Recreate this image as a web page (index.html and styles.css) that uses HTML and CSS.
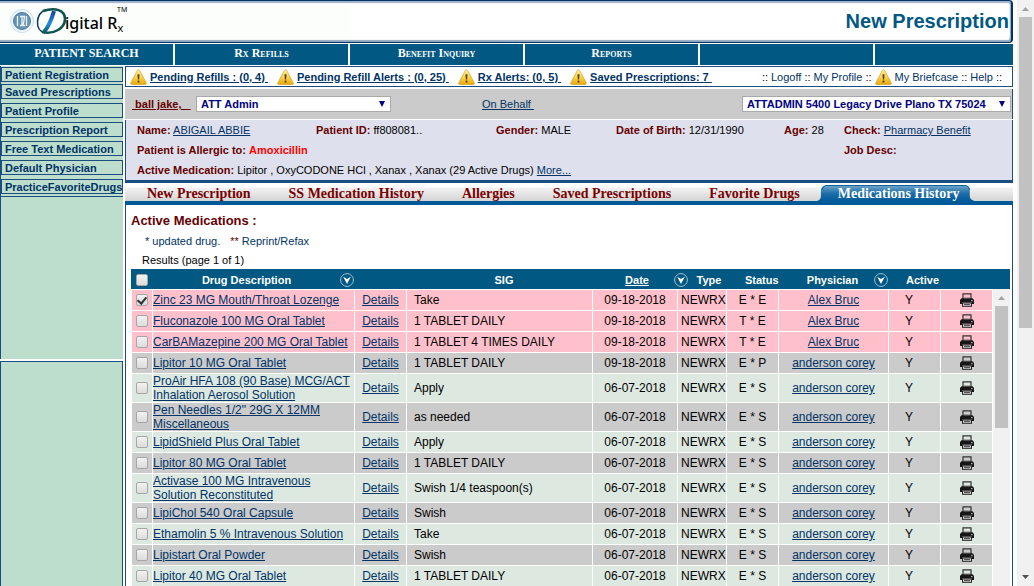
FILE: index.html
```
<!DOCTYPE html>
<html lang="en">
<head>
<meta charset="utf-8">
<title>Digital Rx - New Prescription</title>
<link rel="stylesheet" href="styles.css">
</head>
<body>
<svg class="defs" aria-hidden="true">
  <defs>
    <linearGradient id="gold" x1="0" y1="0" x2="0" y2="1"><stop offset="0" stop-color="#fff0a0"/><stop offset=".5" stop-color="#fbd34a"/><stop offset="1" stop-color="#e8a80c"/></linearGradient>
    <linearGradient id="tabfill" x1="0" y1="0" x2="0" y2="1"><stop offset="0" stop-color="#6fa6cc"/><stop offset=".5" stop-color="#1f6fa8"/><stop offset="1" stop-color="#005a99"/></linearGradient>
    <linearGradient id="dfill" x1="0" y1="0" x2="0" y2="1"><stop offset="0" stop-color="#1a3f9a"/><stop offset=".6" stop-color="#1f8fe0"/><stop offset="1" stop-color="#0b5a6c"/></linearGradient>
  </defs>
  <symbol id="warn" viewBox="0 0 17 16"><path d="M8.5.8 Q9.3.8 9.8 1.8 L16.3 14 Q16.6 15.4 15.3 15.5 H1.7 Q.4 15.4.7 14 L7.2 1.8 Q7.7.8 8.5.8Z" fill="url(#gold)" stroke="#d9a21b" stroke-width=".7"/><path d="M7.5 5.2h2l-.4 5.2H7.9z" fill="#4a3a2a"/><rect x="7.6" y="11.6" width="1.8" height="1.9" fill="#4a3a2a"/></symbol>
  <symbol id="print" viewBox="0 0 14 14"><path d="M3 6V.9h8V6" fill="none" stroke="#333" stroke-width="1.2"/><path d="M1.5 5.200h11L14 7v4h-2V9.600H2V11H0V7z" fill="#161616"/><path d="M3.600 5h6.800" stroke="#555" stroke-width=".8"/><rect x="2.500" y="10" width="9" height="3.300" fill="#ddd" stroke="#222"/><path d="M4 11.600h6" stroke="#444"/><rect x="11" y="7.200" width="1.600" height="1" fill="#ccc"/></symbol>
  <symbol id="sort" viewBox="0 0 14 14"><circle cx="7" cy="7" r="6.4" fill="none" stroke="#9fc0d2"/><path d="M3.200 3.800 7 6l3.800-2.200L7 11z" fill="#fff"/></symbol>
</svg>
<div class="app">
  <div class="page">
    <header class="banner">
      <svg class="logo" viewBox="0 0 130 38" role="img" aria-label="Digital Rx">
        <circle cx="22" cy="20" r="11.500" fill="#f0f7fc" stroke="#c6dff0"/>
        <circle cx="22" cy="20" r="8.500" fill="#6a93b3" stroke="#4d7c9f"/>
        <path d="M17.500 15v10M26.500 15v10M20 15.500h2v9h-2M22.500 15.500h2q-.5 5-1.500 9h2" fill="none" stroke="#e9f3fa" stroke-width="1.300"/>
        <path d="M45 9 C36 13 34 29 45 32" fill="none" stroke="#0d3468" stroke-width="1.500"/>
        <path d="M43 10 C55 6 65 9 65 18 C65 27 54 34 42 31" fill="none" stroke="#0b5450" stroke-width="2.600"/>
        <path d="M54 10 Q50 24 44 31" fill="none" stroke="url(#dfill)" stroke-width="4"/>
        <text x="65" y="28" class="logo-text">igital R<tspan class="logo-sub" dy="3">x</tspan></text>
        <text x="117" y="11" class="logo-tm">TM</text>
      </svg>
      <h1>New Prescription</h1>
    </header>
    <nav class="mainnav">
      <a href="#" class="caps">PATIENT SEARCH</a><a href="#">Rx Refills</a><a href="#">Benefit Inquiry</a><a href="#">Reports</a><span></span><span></span>
    </nav>
    <div class="body">
      <aside class="sidebar">
        <nav class="sidemenu">
          <a href="#">Patient Registration</a>
          <a href="#">Saved Prescriptions</a>
          <a href="#">Patient Profile</a>
          <a href="#">Prescription Report</a>
          <a href="#">Free Text Medication</a>
          <a href="#">Default Physician</a>
          <a href="#">PracticeFavoriteDrugs</a>
        </nav>
        <div class="sidebox"></div>
      </aside>
      <main class="main">
        <div class="alerts">
          <a href="#"><svg class="warn"><use href="#warn"/></svg><b>Pending Refills : (0, 4)&nbsp;</b></a>
          <a href="#"><svg class="warn"><use href="#warn"/></svg><b>Pending Refill Alerts : (0, 25)&nbsp;</b></a>
          <a href="#"><svg class="warn"><use href="#warn"/></svg><b>Rx Alerts: (0, 5)&nbsp;</b></a>
          <a href="#"><svg class="warn"><use href="#warn"/></svg><b>Saved Prescriptions: 7&nbsp;</b></a>
          <div class="account"><span>::</span><a href="#">Logoff</a><span>::</span><a href="#">My Profile</a><span>::</span><svg class="warn"><use href="#warn"/></svg><a href="#">My Briefcase</a><span>::</span><a href="#">Help</a><span>::</span></div>
        </div>
        <div class="context">
          <a href="#" class="user">&nbsp;ball jake,&nbsp;&nbsp;&nbsp;</a>
          <div class="pick pick-user"><select aria-label="User"><option>ATT Admin</option></select></div>
          <a href="#" class="behalf">On Behalf&nbsp;</a>
          <div class="pick pick-place"><select aria-label="Location"><option>ATTADMIN 5400 Legacy Drive Plano TX 75024</option></select></div>
        </div>
        <section class="patient">
          <div><b>Name:</b> <a href="#">ABIGAIL ABBIE</a></div>
          <div><b>Patient ID:</b> ff808081..</div>
          <div><b>Gender:</b> MALE</div>
          <div><b>Date of Birth:</b> 12/31/1990</div>
          <div><b>Age:</b> 28</div>
          <div><b>Check:</b> <a href="#">Pharmacy Benefit</a></div>
          <div class="span5"><b>Patient is Allergic to:</b> <b class="allergy">Amoxicillin</b></div>
          <div><b>Job Desc:</b></div>
          <div class="span5"><b>Active Medication:</b> Lipitor , OxyCODONE HCl , Xanax , Xanax (29 Active Drugs) <a href="#">More...</a></div>
        </section>
        <nav class="tabs">
          <a href="#">New Prescription</a><a href="#">SS Medication History</a><a href="#">Allergies</a><a href="#">Saved Prescriptions</a><a href="#">Favorite Drugs</a>
          <a href="#" class="current"><svg viewBox="0 0 160 16" preserveAspectRatio="none" aria-hidden="true"><path d="M0 16Q4 15 4 11V6Q4 .5 9 .5H151Q155 .5 155 6V11Q155 15 160 16Z" fill="url(#tabfill)"/><path d="M5 5Q6 1 9 .5H151Q154 1 155 5" fill="none" stroke="#0f5f96"/></svg><span>Medications History</span></a>
        </nav>
        <section class="content">
          <h2>Active Medications :</h2>
          <p class="legend"><span>* updated drug.</span><span><i>**</i> Reprint/Refax</span></p>
          <p class="results">Results (page 1 of 1)</p>
          <div class="gridwrap">
            <table class="meds">
              <colgroup><col class="c-check"><col class="c-drug"><col class="c-details"><col><col class="c-date"><col class="c-type"><col class="c-status"><col class="c-doc"><col class="c-active"><col class="c-print"></colgroup>
              <thead><tr>
                <th><input type="checkbox" aria-label="Select all"></th>
                <th><div class="head"><span>Drug Description</span><svg class="sort"><use href="#sort"/></svg></div></th>
                <th></th>
                <th class="sig">SIG</th>
                <th class="date"><a href="#">Date</a></th>
                <th><div class="head type"><svg class="sort"><use href="#sort"/></svg><span>Type</span></div></th>
                <th class="status">Status</th>
                <th><div class="head doc"><span>Physician</span><svg class="sort"><use href="#sort"/></svg></div></th>
                <th class="active">Active</th>
                <th></th>
              </tr></thead>
              <tbody>
                <tr class="pink"><td><input type="checkbox" aria-label="Select Zinc" checked></td><td><a href="#">Zinc 23 MG Mouth/Throat Lozenge</a></td><td><a href="#">Details</a></td><td>Take</td><td>09-18-2018</td><td>NEWRX</td><td>E * E</td><td><a href="#">Alex Bruc</a></td><td>Y</td><td><svg class="print"><use href="#print"/></svg></td></tr>
                <tr class="pink"><td><input type="checkbox" aria-label="Select Fluconazole"></td><td><a href="#">Fluconazole 100 MG Oral Tablet</a></td><td><a href="#">Details</a></td><td>1 TABLET DAILY</td><td>09-18-2018</td><td>NEWRX</td><td>T * E</td><td><a href="#">Alex Bruc</a></td><td>Y</td><td><svg class="print"><use href="#print"/></svg></td></tr>
                <tr class="pink"><td><input type="checkbox" aria-label="Select CarBAMazepine"></td><td><a href="#">CarBAMazepine 200 MG Oral Tablet</a></td><td><a href="#">Details</a></td><td>1 TABLET 4 TIMES DAILY</td><td>09-18-2018</td><td>NEWRX</td><td>T * E</td><td><a href="#">Alex Bruc</a></td><td>Y</td><td><svg class="print"><use href="#print"/></svg></td></tr>
                <tr class="gray"><td><input type="checkbox" aria-label="Select Lipitor 10"></td><td><a href="#">Lipitor 10 MG Oral Tablet</a></td><td><a href="#">Details</a></td><td>1 TABLET DAILY</td><td>09-18-2018</td><td>NEWRX</td><td>E * P</td><td><a href="#">anderson corey</a></td><td>Y</td><td><svg class="print"><use href="#print"/></svg></td></tr>
                <tr><td><input type="checkbox" aria-label="Select ProAir"></td><td><a href="#">ProAir HFA 108 (90 Base) MCG/ACT Inhalation Aerosol Solution</a></td><td><a href="#">Details</a></td><td>Apply</td><td>06-07-2018</td><td>NEWRX</td><td>E * S</td><td><a href="#">anderson corey</a></td><td>Y</td><td><svg class="print"><use href="#print"/></svg></td></tr>
                <tr class="gray"><td><input type="checkbox" aria-label="Select Pen Needles"></td><td><a href="#">Pen Needles 1/2" 29G X 12MM Miscellaneous</a></td><td><a href="#">Details</a></td><td>as needed</td><td>06-07-2018</td><td>NEWRX</td><td>E * S</td><td><a href="#">anderson corey</a></td><td>Y</td><td><svg class="print"><use href="#print"/></svg></td></tr>
                <tr><td><input type="checkbox" aria-label="Select LipidShield"></td><td><a href="#">LipidShield Plus Oral Tablet</a></td><td><a href="#">Details</a></td><td>Apply</td><td>06-07-2018</td><td>NEWRX</td><td>E * S</td><td><a href="#">anderson corey</a></td><td>Y</td><td><svg class="print"><use href="#print"/></svg></td></tr>
                <tr class="gray"><td><input type="checkbox" aria-label="Select Lipitor 80"></td><td><a href="#">Lipitor 80 MG Oral Tablet</a></td><td><a href="#">Details</a></td><td>1 TABLET DAILY</td><td>06-07-2018</td><td>NEWRX</td><td>E * S</td><td><a href="#">anderson corey</a></td><td>Y</td><td><svg class="print"><use href="#print"/></svg></td></tr>
                <tr><td><input type="checkbox" aria-label="Select Activase"></td><td><a href="#">Activase 100 MG Intravenous Solution Reconstituted</a></td><td><a href="#">Details</a></td><td>Swish 1/4 teaspoon(s)</td><td>06-07-2018</td><td>NEWRX</td><td>E * S</td><td><a href="#">anderson corey</a></td><td>Y</td><td><svg class="print"><use href="#print"/></svg></td></tr>
                <tr class="gray"><td><input type="checkbox" aria-label="Select LipiChol"></td><td><a href="#">LipiChol 540 Oral Capsule</a></td><td><a href="#">Details</a></td><td>Swish</td><td>06-07-2018</td><td>NEWRX</td><td>E * S</td><td><a href="#">anderson corey</a></td><td>Y</td><td><svg class="print"><use href="#print"/></svg></td></tr>
                <tr><td><input type="checkbox" aria-label="Select Ethamolin"></td><td><a href="#">Ethamolin 5 % Intravenous Solution</a></td><td><a href="#">Details</a></td><td>Take</td><td>06-07-2018</td><td>NEWRX</td><td>E * S</td><td><a href="#">anderson corey</a></td><td>Y</td><td><svg class="print"><use href="#print"/></svg></td></tr>
                <tr class="gray"><td><input type="checkbox" aria-label="Select Lipistart"></td><td><a href="#">Lipistart Oral Powder</a></td><td><a href="#">Details</a></td><td>Swish</td><td>06-07-2018</td><td>NEWRX</td><td>E * S</td><td><a href="#">anderson corey</a></td><td>Y</td><td><svg class="print"><use href="#print"/></svg></td></tr>
                <tr><td><input type="checkbox" aria-label="Select Lipitor 40"></td><td><a href="#">Lipitor 40 MG Oral Tablet</a></td><td><a href="#">Details</a></td><td>1 TABLET DAILY</td><td>06-07-2018</td><td>NEWRX</td><td>E * S</td><td><a href="#">anderson corey</a></td><td>Y</td><td><svg class="print"><use href="#print"/></svg></td></tr>
              </tbody>
            </table>
            <div class="gridside"><div class="headfill"></div><div class="scroll inner"><svg viewBox="0 0 17 17"><path d="M5 11 8.500 7l3.500 4z" fill="#a3a3a3"/></svg><div class="thumb"></div></div></div>
          </div>
        </section>
      </main>
    </div>
  </div>
  <div class="scroll outer"><svg viewBox="0 0 17 17"><path d="M5 11 8.500 7l3.500 4z" fill="#a3a3a3"/></svg><div class="thumb"></div><svg class="down" viewBox="0 0 17 17"><path d="M5 6h7l-3.500 4z" fill="#505050"/></svg></div>
</div>
</body>
</html>
```
FILE: styles.css
```
* { box-sizing: border-box; }
body { margin: 0; background: #fff; color: #000; font: 11px/14px "Liberation Sans", Arial, sans-serif; }
h1, h2, p { margin: 0; }
a { color: #003366; }
.defs { position: absolute; width: 0; height: 0; }
.app { display: flex; height: 100vh; overflow: hidden; }
.page { flex: 1; min-width: 0; display: flex; flex-direction: column; padding-right: 4px; }

.banner { display: flex; flex: none; justify-content: space-between; align-items: center; height: 43px; padding-right: 2px; border: solid #003366; border-width: 1px 2px 1px 0; border-radius: 0 4px 4px 0; background: linear-gradient(90deg, #fcfefc 350px, #fff 350px); box-shadow: inset -1px 2px 1px #9fb0c8, inset -1px -2px 1px #8fa6c0; }
.logo { width: 130px; height: 38px; align-self: flex-start; }
.logo-text { font: 500 16px "Noto Sans", sans-serif; fill: #000; }
.logo-sub { font: 11px "Noto Sans", sans-serif; }
.logo-tm { font: 7px "Noto Sans", sans-serif; }
.banner h1 { font-size: 20px; line-height: 24px; color: #005883; padding-bottom: 2px; }

.mainnav { display: grid; flex: none; grid-template-columns: repeat(5, 173fr) 138fr; gap: 2px; margin: 1px 0; height: 21px; }
.mainnav > * { background: #005883; color: #fff; text-align: center; text-decoration: none; font: bold 12px/18px "Liberation Serif", "Times New Roman", serif; font-variant: small-caps; }
.mainnav .caps { font-variant: normal; }

.body { flex: 1; min-height: 0; display: flex; gap: 2px; }
.sidebar { width: 123px; flex: none; display: flex; flex-direction: column; gap: 2px; }
.sidemenu { height: 293px; background: #bddecd; border-left: 1px solid #1c4d80; padding-top: 1px; display: flex; flex-direction: column; }
.sidemenu a { height: 15px; border: 1px solid #1c4d80; padding: 0 3px; line-height: 14px; font-weight: bold; text-decoration: none; white-space: nowrap; margin-top: 4px; }
.sidemenu a:first-child { margin-top: 0; }
.sidemenu a:nth-child(2) { margin-top: 2px; }
.sidemenu::after { content: ""; border-top: 1px solid #1c4d80; margin-top: 2px; }
.sidebox { flex: 1; background: #bddecd; border: 1px solid #1c4d80; border-bottom: 0; }
.main { flex: 1; min-width: 0; display: flex; flex-direction: column; }

.alerts { display: flex; flex: none; align-items: center; gap: 9px; height: 21px; border: 1px solid #1c4d80; padding: 0 10px 0 4px; white-space: nowrap; }
.alerts > a { display: flex; align-items: center; gap: 3px; }
.alerts .warn, .account .warn { width: 17px; height: 16px; flex: none; }
.account { margin-left: auto; display: flex; align-items: center; gap: 3px; }
.account a { text-decoration: none; }

.context { display: flex; flex: none; align-items: center; height: 30px; margin: 2px 0 1px; padding: 0 1px 0 7px; background: #cbcbcb; border-right: 1px solid #1c4d80; }
.user { width: 64px; font-weight: bold; color: #660000; }
.pick { position: relative; }
.pick::after { content: ""; position: absolute; right: 6px; top: 5px; border: solid transparent; border-width: 6px 3px 0; border-top-color: #000080; pointer-events: none; }
.pick select { appearance: none; display: block; width: 100%; height: 16px; padding: 0 4px; border: 1px solid #a9a9a9; background: #fff; color: #000080; font: bold 11px/14px "Liberation Sans", Arial, sans-serif; }
.pick-user { width: 195px; }
.pick-place { width: 269px; margin-left: auto; }
.behalf { margin-left: 91px; }

.patient { display: grid; flex: none; grid-template-columns: 179fr 180fr 120fr 168fr 60fr 168fr; grid-auto-rows: 20px; line-height: 20px; background: #dfe0ed; border: solid #1c4d80; border-width: 0 1px 3px; padding-left: 11px; white-space: nowrap; }
.patient b { color: #660000; }
.patient .allergy { color: #f00; }
.span5 { grid-column: 1 / span 5; }

.tabs { display: flex; flex: none; align-items: center; gap: 38px; height: 22px; padding: 0 0 0 22px; border-bottom: 4px solid #005a99; background: linear-gradient(#fff 4px, #f2f2f2 5px, #d4d4d4 18px); font: bold 14px/17px "Liberation Serif", "Times New Roman", serif; white-space: nowrap; }
.tabs a { color: #7a0000; text-decoration: none; padding-top: 2px; }
.tabs .current { position: relative; align-self: flex-end; height: 16px; margin-left: -21px; padding: 0 15px 0 21px; color: #fff; }
.current svg { position: absolute; inset: 0; width: 100%; height: 100%; }
.current span { position: relative; }

.content { flex: 1; min-height: 0; overflow: hidden; border: solid #1c4d80; border-width: 0 1px; padding: 8px 2px 0 5px; display: flex; flex-direction: column; }
.content h2 { font-size: 13px; line-height: 16px; color: #660000; }
.legend { display: flex; gap: 10px; margin: 5px 0 5px 14px; color: #003366; }
.legend i { font-style: normal; color: #660000; }
.results { margin-left: 11px; margin-bottom: 2px; }
.gridwrap { flex: 1; min-height: 0; display: flex; }
.meds { flex: 1; table-layout: fixed; width: 0; height: max-content; border-collapse: separate; border-spacing: 1px; font-size: 12px; line-height: 14px; }
.c-check { width: 20px; } .c-drug { width: 201px; } .c-details { width: 51px; } .c-date { width: 84px; }
.c-type { width: 48px; } .c-status { width: 51px; } .c-doc { width: 109px; } .c-active { width: 51px; } .c-print { width: 51px; }
.meds th { height: 19px; padding: 0; background: #005883; box-shadow: 1px 0 #005883, -1px 0 #005883, 1px -1px #005883, -1px -1px #005883; color: #fff; font-size: 11px; }
.meds th a { color: #fff; }
.meds .sig { padding-left: 9px; }
.meds .date { padding-left: 4px; }
.meds .status { padding-left: 18px; text-align: left; }
.meds .active { padding-left: 17px; text-align: left; }
.head { display: flex; align-items: center; }
.head span { flex: 1; }
.head.doc { padding-left: 12px; }
.sort { width: 14px; height: 14px; flex: none; }
.head.type { margin-left: -4px; }
.head.type span { padding-left: 4px; }
.meds td { height: 20px; padding: 0; background: #dde8e1; text-align: center; vertical-align: middle; }
.meds td:nth-child(2) { text-align: left; }
.meds td:nth-child(4) { text-align: left; padding-left: 7px; }
.meds td:nth-child(6) { text-align: left; padding-left: 3px; white-space: nowrap; }
.meds td:nth-child(9) { text-align: left; padding-left: 16px; }
.meds .pink td { background: #ffc0cb; }
.meds .gray td { background: #cbcbcb; }
.meds input { appearance: none; display: block; width: 12px; height: 12px; margin: 0 auto; border: 1px solid #a6a6a6; border-radius: 2px; background: linear-gradient(#f2f2f2, #dcdcdc); }
.meds input:checked::after { content: ""; display: block; width: 4px; height: 7px; margin: 0 auto; border: solid #333; border-width: 0 2px 2px 0; transform: rotate(40deg); }
.print { display: block; width: 14px; height: 14px; margin: 0 auto; }

.gridside { width: 17px; flex: none; display: flex; flex-direction: column; }
.headfill { height: 20px; background: #005883; }
.scroll { width: 17px; display: flex; flex-direction: column; background: #f1f1f1; }
.scroll svg { width: 17px; height: 17px; flex: none; }
.scroll .thumb { margin: 0 2px; background: #c1c1c1; height: 53%; }
.scroll.outer { flex: none; }
.scroll .down { margin-top: auto; }
.scroll.inner { flex: 1; }
.scroll.inner .thumb { height: 41%; }
```
